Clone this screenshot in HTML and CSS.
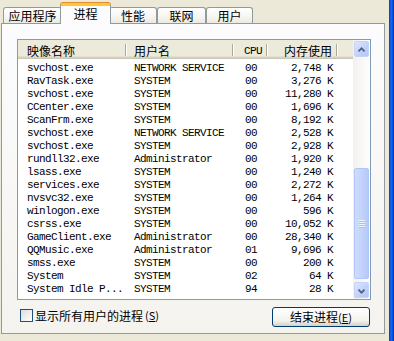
FILE: index.html
```html
<!DOCTYPE html>
<html lang="zh-CN">
<head>
    <meta charset="UTF-8">
    <title>任务管理器 - 进程</title>
    <link rel="stylesheet" href="styles.css">
</head>
<body>
<div class="window">
    <div class="main">
        <div class="tabs">
            <div class="tab tab-apps">应用程序</div>
            <div class="tab tab-proc active">进程</div>
            <div class="tab tab-perf">性能</div>
            <div class="tab tab-net">联网</div>
            <div class="tab tab-user">用户</div>
        </div>

        <div class="panel">
            <div class="listview">
                <div class="list-body">
                    <div class="list-head">
                        <div class="hcell c1">映像名称</div>
                        <div class="hcell c2">用户名</div>
                        <div class="hcell c3 mono">CPU</div>
                        <div class="hcell c4">内存使用</div>
                        <div class="hcell c5"></div>
                    </div>
                    <div class="rows mono">
                        <div class="row"><span class="c1">svchost.exe</span><span class="c2">NETWORK SERVICE</span><span class="c3">00</span><span class="c4">2,748 K</span></div>
                        <div class="row"><span class="c1">RavTask.exe</span><span class="c2">SYSTEM</span><span class="c3">00</span><span class="c4">3,276 K</span></div>
                        <div class="row"><span class="c1">svchost.exe</span><span class="c2">SYSTEM</span><span class="c3">00</span><span class="c4">11,280 K</span></div>
                        <div class="row"><span class="c1">CCenter.exe</span><span class="c2">SYSTEM</span><span class="c3">00</span><span class="c4">1,696 K</span></div>
                        <div class="row"><span class="c1">ScanFrm.exe</span><span class="c2">SYSTEM</span><span class="c3">00</span><span class="c4">8,192 K</span></div>
                        <div class="row"><span class="c1">svchost.exe</span><span class="c2">NETWORK SERVICE</span><span class="c3">00</span><span class="c4">2,528 K</span></div>
                        <div class="row"><span class="c1">svchost.exe</span><span class="c2">SYSTEM</span><span class="c3">00</span><span class="c4">2,928 K</span></div>
                        <div class="row"><span class="c1">rundll32.exe</span><span class="c2">Administrator</span><span class="c3">00</span><span class="c4">1,920 K</span></div>
                        <div class="row"><span class="c1">lsass.exe</span><span class="c2">SYSTEM</span><span class="c3">00</span><span class="c4">1,240 K</span></div>
                        <div class="row"><span class="c1">services.exe</span><span class="c2">SYSTEM</span><span class="c3">00</span><span class="c4">2,272 K</span></div>
                        <div class="row"><span class="c1">nvsvc32.exe</span><span class="c2">SYSTEM</span><span class="c3">00</span><span class="c4">1,264 K</span></div>
                        <div class="row"><span class="c1">winlogon.exe</span><span class="c2">SYSTEM</span><span class="c3">00</span><span class="c4">596 K</span></div>
                        <div class="row"><span class="c1">csrss.exe</span><span class="c2">SYSTEM</span><span class="c3">00</span><span class="c4">10,052 K</span></div>
                        <div class="row"><span class="c1">GameClient.exe</span><span class="c2">Administrator</span><span class="c3">00</span><span class="c4">28,340 K</span></div>
                        <div class="row"><span class="c1">QQMusic.exe</span><span class="c2">Administrator</span><span class="c3">01</span><span class="c4">9,696 K</span></div>
                        <div class="row"><span class="c1">smss.exe</span><span class="c2">SYSTEM</span><span class="c3">00</span><span class="c4">200 K</span></div>
                        <div class="row"><span class="c1">System</span><span class="c2">SYSTEM</span><span class="c3">02</span><span class="c4">64 K</span></div>
                        <div class="row"><span class="c1">System Idle P...</span><span class="c2">SYSTEM</span><span class="c3">94</span><span class="c4">28 K</span></div>
                    </div>
                </div>

                <!-- 滚动条 -->
                <div class="scrollbar">
                    <div class="sb-btn">
                        <svg width="15" height="16" viewBox="0 0 15 16"><polyline points="4,9.5 7.5,6 11,9.5" fill="none" stroke="#4d6185" stroke-width="2"/></svg>
                    </div>
                    <div class="sb-track"></div>
                    <div class="sb-thumb">
                        <div class="grip"></div>
                        <div class="grip"></div>
                        <div class="grip"></div>
                        <div class="grip"></div>
                    </div>
                    <div class="sb-btn sb-down">
                        <svg width="15" height="16" viewBox="0 0 15 16"><polyline points="4,6.5 7.5,10 11,6.5" fill="none" stroke="#4d6185" stroke-width="2"/></svg>
                    </div>
                </div>
            </div>

            <div class="footer">
                <label class="check"><span class="box"></span>显示所有用户的进程 <span class="key">(<u>S</u>)</span></label>
                <button class="btn">结束进程<span class="key">(<u>E</u>)</span></button>
            </div>
        </div>
    </div>
    <div class="frame"></div>
</div>
</body>
</html>
```

FILE: styles.css
```css
body {
    margin: 0;
    background: #ece9d8;
    font-family: "Noto Sans CJK SC", sans-serif;
    font-size: 12px;
    color: #000;
}

.window {
    width: 394px;
    height: 341px;
    display: flex;
    overflow: hidden;
}

.main {
    width: 388px;
    padding-left: 1px;
}

.frame {
    width: 5px;
    background: linear-gradient(90deg, #0831d9, #166aee 40%, #0855dd 70%, #0019cf);
}

.mono {
    font-family: "Liberation Mono", "Noto Sans CJK SC", monospace;
    font-size: 11px;
    letter-spacing: -0.6px;
}

/* 选项卡 */
.tabs {
    height: 23px;
    display: flex;
    align-items: flex-end;
    padding-left: 2px;
}

.tab {
    box-sizing: border-box;
    height: 16px;
    border: 1px solid #919b9c;
    border-bottom: none;
    border-radius: 3px 3px 0 0;
    background: linear-gradient(#ffffff, #f6f5f1 60%, #ebe9e0);
    display: flex;
    align-items: center;
    justify-content: center;
    line-height: 12px;
}

.tab-apps { width: 59px; }
.tab-proc { width: 47px; }
.tab-perf { width: 48px; }
.tab-net  { width: 49px; }
.tab-user { width: 47px; }

.tab.active {
    position: relative;
    z-index: 2;
    height: 21px;
    width: 51px;
    margin: 0 -2px -1px;
    border-top: 3px solid #ffc73c;
    box-shadow: inset 0 -1px 0 #fcfcfe, 0 -1px 0 #e68b2c;
    background: #fcfcfe;
    padding-bottom: 3px;
}

/* 面板 */
.panel {
    box-sizing: border-box;
    width: 384px;
    height: 311px;
    border: 1px solid #919b9c;
    background: linear-gradient(#fcfcfe, #f4f3ee);
    padding: 15px 0 0 15px;
}

.listview {
    box-sizing: border-box;
    width: 354px;
    height: 261px;
    border: 1px solid #7f9db9;
    background: #fff;
    display: flex;
}

.list-body {
    flex: 1;
    overflow: hidden;
}

.list-head,
.row {
    display: grid;
    grid-template-columns: 108px 107px 34px 70px 1fr;
}

.list-head {
    height: 19px;
    background: #ebeadb;
    box-shadow: inset 0 -1px #cbc7b8, inset 0 -2px #d6d2c2, inset 0 -3px #e2decd;
}

.hcell {
    border-right: 1px solid #aca899;
    box-shadow: 1px 0 #fff;
    margin-top: 4px;
    height: 12px;
    line-height: 14px;
    white-space: nowrap;
}

.hcell.c1 { padding-left: 9px; }
.hcell.c2 { padding-left: 8px; }
.hcell.c3 { padding-left: 11px; }
.hcell.c4 { text-align: right; padding-right: 4px; }
.hcell.c5 { border-right: none; box-shadow: none; }

.rows {
    padding-top: 3px;
}

.row {
    height: 13px;
    line-height: 13px;
    white-space: nowrap;
}

.row .c1 { padding-left: 9px; }
.row .c2 { padding-left: 8px; }
.row .c3 { padding-left: 12px; }
.row .c4 { text-align: right; padding-right: 4px; }

/* 滚动条 */
.scrollbar {
    width: 17px;
    background: linear-gradient(90deg, #f3f1ec, #fefefe);
    display: flex;
    flex-direction: column;
}

.sb-btn {
    box-sizing: border-box;
    height: 16px;
    margin: 1px 1px 0;
    border: 1px solid #c3d3fd;
    border-radius: 2px;
    background: linear-gradient(135deg, #dde6fd, #c0d0f8 60%, #b4c7f5);
    display: flex;
}

.sb-down {
    margin: 0 1px 1px;
}

.sb-track {
    flex: 1;
}

.sb-thumb {
    box-sizing: border-box;
    height: 111px;
    margin: 0 1px 3px;
    border: 1px solid #b1c6f8;
    border-radius: 2px;
    background: linear-gradient(90deg, #cfdcfd, #c2d3fc 50%, #b6c9f6);
    display: flex;
    flex-direction: column;
    justify-content: center;
    align-items: center;
    gap: 1px;
}

.grip {
    width: 6px;
    height: 1px;
    background: #eef4fe;
    box-shadow: 0 1px 0 #a8bff5;
}

/* 底部 */
.footer {
    width: 354px;
    box-sizing: border-box;
    margin-top: 7px;
    padding: 0 1px 0 3px;
    display: flex;
    justify-content: space-between;
    align-items: flex-start;
}

.check {
    display: flex;
    align-items: center;
    gap: 2px;
    margin-top: 2px;
    height: 13px;
    line-height: 13px;
}

.box {
    box-sizing: border-box;
    width: 13px;
    height: 13px;
    border: 1px solid #1c5180;
    background: linear-gradient(135deg, #dcdcd7, #fff);
}

.key {
    font-size: 11px;
}

.btn {
    box-sizing: border-box;
    width: 98px;
    height: 20px;
    border: 1px solid #003c74;
    border-radius: 3px;
    background: linear-gradient(#ffffff, #f4f3ee 70%, #d6d0c5);
    font-family: "Noto Sans CJK SC", sans-serif;
    font-size: 12px;
    line-height: 16px;
    padding: 0;
    color: #000;
}
```
